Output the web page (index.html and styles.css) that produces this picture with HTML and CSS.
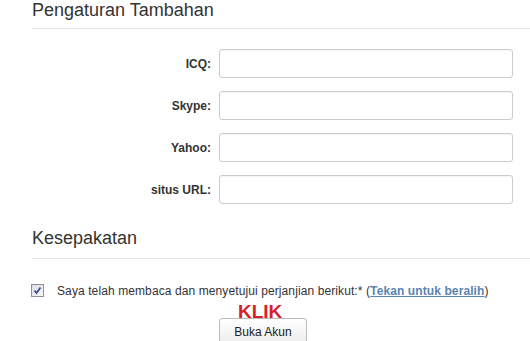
FILE: index.html
```html
<!DOCTYPE html>
<html>
<head>
<meta charset="utf-8">
<link rel="stylesheet" href="styles.css">
</head>
<body>
<div class="page">
  <h2 class="section-title">Pengaturan Tambahan</h2>
  <div class="form">
    <div class="row"><label class="label">ICQ:</label><input class="field" type="text"></div>
    <div class="row"><label class="label">Skype:</label><input class="field" type="text"></div>
    <div class="row"><label class="label">Yahoo:</label><input class="field" type="text"></div>
    <div class="row"><label class="label">situs URL:</label><input class="field" type="text"></div>
  </div>
  <h2 class="section-title second">Kesepakatan</h2>
  <div class="agree">
    <span class="check"><svg width="11" height="11" viewBox="0 0 11 11"><path d="M2.5 5.5 L4.5 8 L8.5 2.5" fill="none" stroke="#3d4f86" stroke-width="1.8"/></svg></span>
    <span class="agree-text">Saya telah membaca dan menyetujui perjanjian berikut:* (<a class="toggle" href="#">Tekan untuk beralih</a>)</span>
  </div>
  <div class="actions">
    <div class="klik">KLIK</div>
    <button class="btn">Buka Akun</button>
  </div>
</div>
</body>
</html>
```
FILE: styles.css
```css
html, body {
  margin: 0;
  padding: 0;
  background: #fff;
  overflow: hidden;
}
body {
  font-family: "Liberation Sans", Arial, sans-serif;
  color: #333;
}
.page {
  padding-left: 32px;
}
.section-title {
  margin: 0;
  font-size: 18px;
  font-weight: normal;
  line-height: 20px;
  color: #333;
  padding-bottom: 8px;
  border-bottom: 1px solid #e5e5e5;
}
.section-title.second {
  margin-top: 24px;
  padding-bottom: 10px;
}
.form {
  margin-top: 20px;
  display: flex;
  flex-direction: column;
  gap: 13px;
}
.row {
  display: flex;
  align-items: center;
  gap: 8px;
}
.label {
  width: 179px;
  text-align: right;
  font-size: 12px;
  font-weight: bold;
  color: #333;
}
.field {
  box-sizing: border-box;
  width: 294px;
  height: 29px;
  margin: 0;
  border: 1px solid #ccc;
  border-radius: 3px;
  background: #fff;
  box-shadow: inset 0 1px 1px rgba(0,0,0,0.04);
}
.agree {
  margin-top: 25px;
  display: flex;
  align-items: center;
  gap: 13px;
  height: 13px;
  font-size: 12px;
}
.agree-text {
  letter-spacing: 0.1px;
}
.check {
  box-sizing: border-box;
  width: 13px;
  height: 13px;
  margin-left: -1px;
  border: 1px solid #8e8f9f;
  background: linear-gradient(135deg, #dcdde6, #f8f8fb);
  display: flex;
  align-items: center;
  justify-content: center;
}
.toggle {
  color: #5b84b1;
  font-weight: bold;
  text-decoration: underline;
}
.actions {
  margin-top: 7px;
  padding-left: 187px;
}
.klik {
  margin-left: 19px;
  margin-bottom: -2px;
  font-size: 19px;
  line-height: 16px;
  font-weight: bold;
  color: #d7202c;
}
.btn {
  box-sizing: border-box;
  width: 88px;
  height: 27px;
  margin: 0;
  padding: 0;
  font-family: "Liberation Sans", Arial, sans-serif;
  font-size: 12px;
  color: #222;
  border: 1px solid #bbb;
  border-radius: 3px;
  background: linear-gradient(#fff, #ececec);
}
```
